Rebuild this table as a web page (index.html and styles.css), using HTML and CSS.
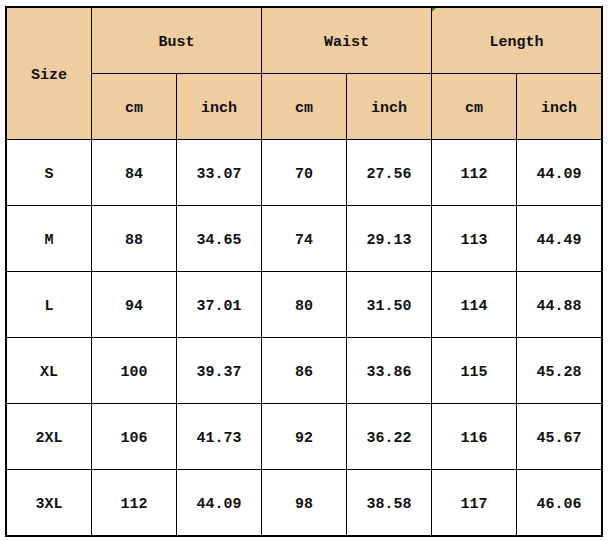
FILE: index.html
```html
<!DOCTYPE html>
<html>
<head>
<meta charset="utf-8">
<link rel="stylesheet" href="styles.css">
</head>
<body>
<div class="chart">
  <div class="cell head size">Size</div>
  <div class="cell head group">Bust</div>
  <div class="cell head group">Waist</div>
  <div class="cell head group marked">Length</div>
  <div class="cell head">cm</div>
  <div class="cell head">inch</div>
  <div class="cell head">cm</div>
  <div class="cell head">inch</div>
  <div class="cell head">cm</div>
  <div class="cell head">inch</div>

  <div class="cell">S</div><div class="cell">84</div><div class="cell">33.07</div><div class="cell">70</div><div class="cell">27.56</div><div class="cell">112</div><div class="cell">44.09</div>
  <div class="cell">M</div><div class="cell">88</div><div class="cell">34.65</div><div class="cell">74</div><div class="cell">29.13</div><div class="cell">113</div><div class="cell">44.49</div>
  <div class="cell">L</div><div class="cell">94</div><div class="cell">37.01</div><div class="cell">80</div><div class="cell">31.50</div><div class="cell">114</div><div class="cell">44.88</div>
  <div class="cell">XL</div><div class="cell">100</div><div class="cell">39.37</div><div class="cell">86</div><div class="cell">33.86</div><div class="cell">115</div><div class="cell">45.28</div>
  <div class="cell">2XL</div><div class="cell">106</div><div class="cell">41.73</div><div class="cell">92</div><div class="cell">36.22</div><div class="cell">116</div><div class="cell">45.67</div>
  <div class="cell">3XL</div><div class="cell">112</div><div class="cell">44.09</div><div class="cell">98</div><div class="cell">38.58</div><div class="cell">117</div><div class="cell">46.06</div>
</div>
</body>
</html>
```
FILE: styles.css
```css
html, body {
  margin: 0;
  background: #ffffff;
}
body {
  padding: 6px 0 0 5px;
}
.chart {
  display: grid;
  grid-template-columns: repeat(7, 84px);
  grid-template-rows: repeat(8, 65px);
  gap: 1px;
  padding: 2px;
  background: #000;
  width: max-content;
  font-family: "Liberation Mono", "DejaVu Sans Mono", monospace;
  font-weight: bold;
  font-size: 15px;
  color: #111;
}
.cell {
  background: #fff;
  display: flex;
  align-items: center;
  justify-content: center;
  padding-top: 4px;
  box-sizing: border-box;
}
.head {
  background: #eecda0;
}
.size {
  grid-row: span 2;
}
.group {
  grid-column: span 2;
}
.marked {
  position: relative;
}
.marked::before {
  content: "";
  position: absolute;
  left: 0;
  top: 0;
  width: 0;
  height: 0;
  border-top: 4px solid #3a8a1e;
  border-right: 4px solid transparent;
}
```
